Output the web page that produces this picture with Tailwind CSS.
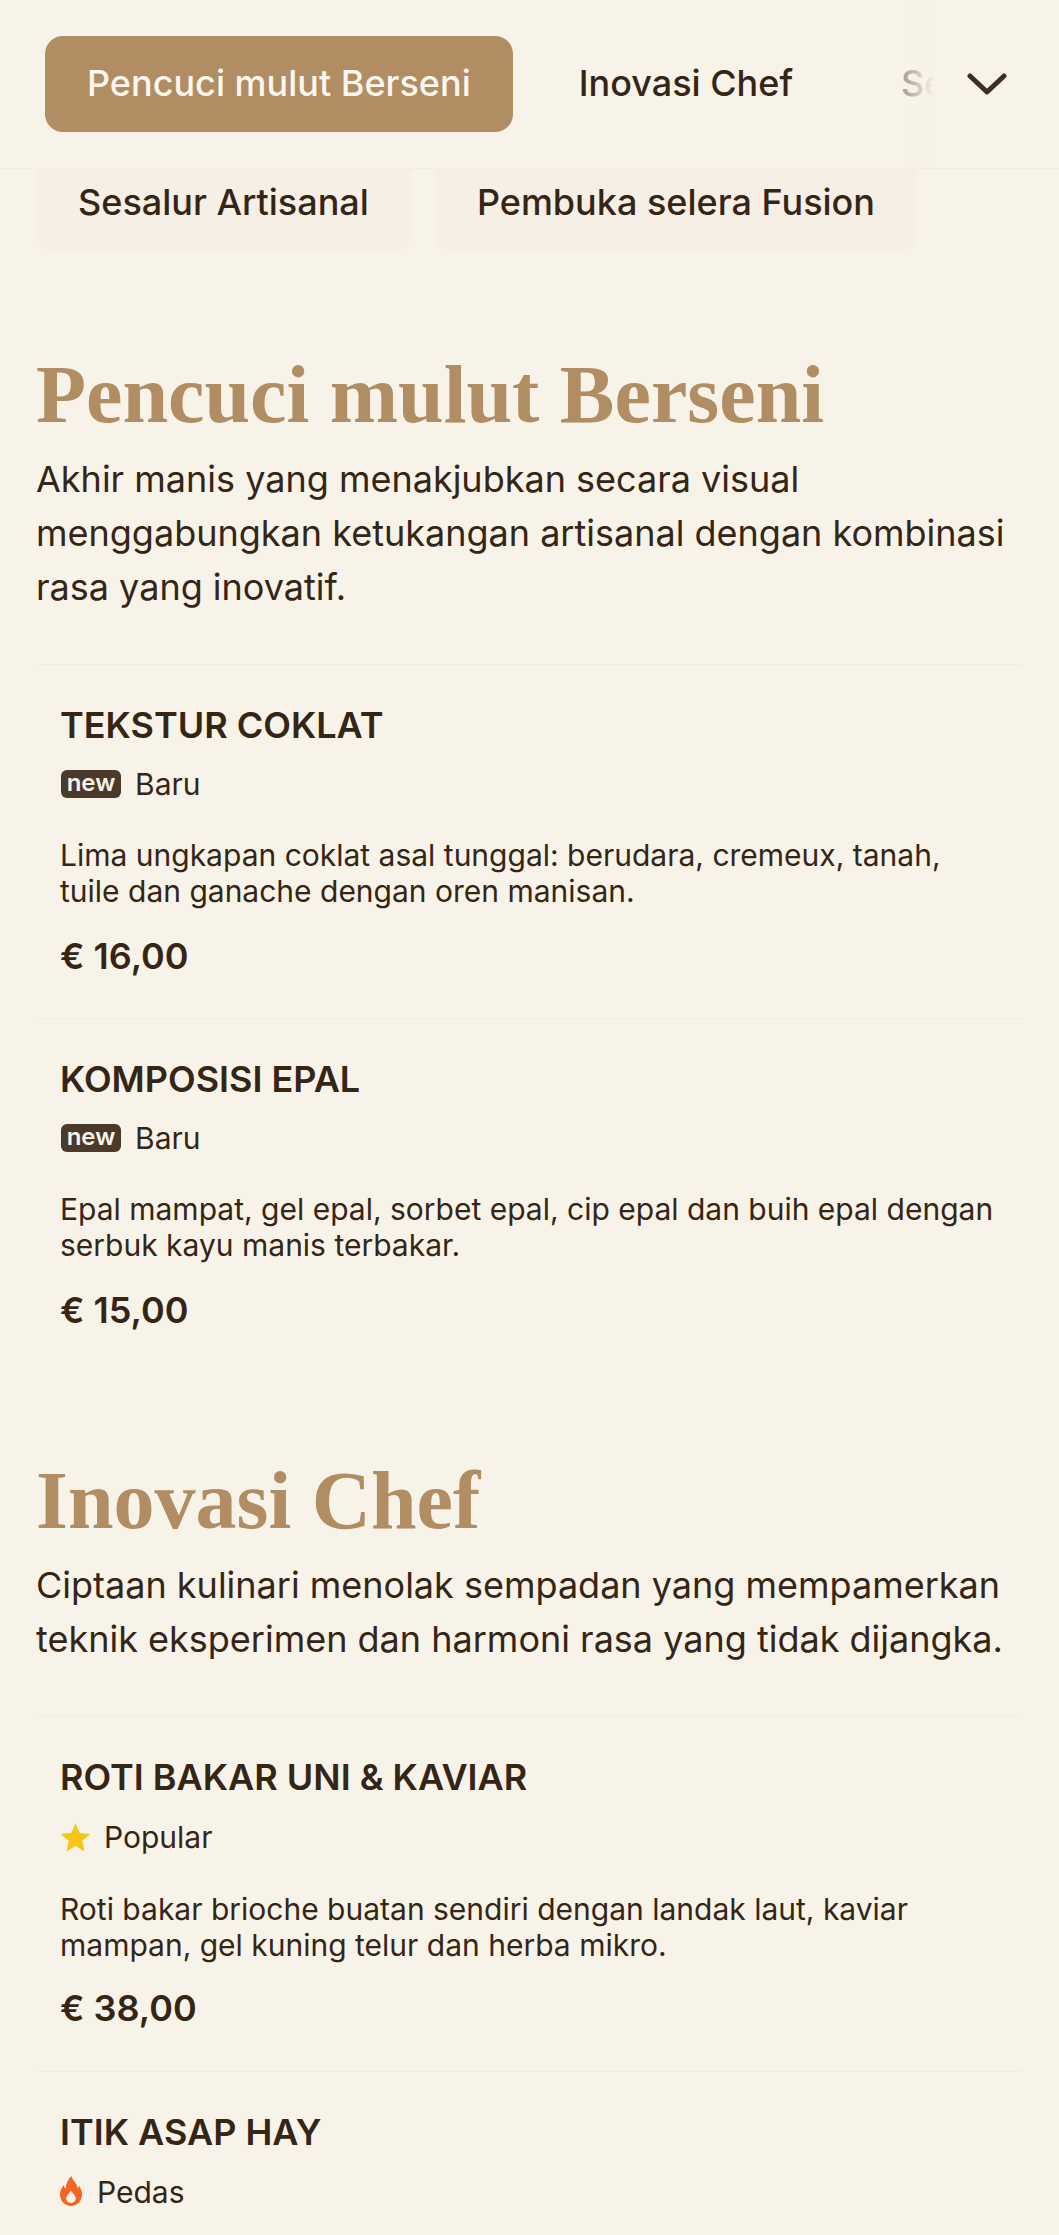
<!DOCTYPE html>
<html>
  <head>
    <meta charset="UTF-8" />
    <meta name="viewport" content="width=device-width, initial-scale=1.0" />
    <script src="https://cdn.jsdelivr.net/npm/@tailwindcss/browser@4"></script>
  </head>
  <body class="bg-[#f8f3e9] font-[Inter,sans-serif] text-[#352515]">
    <div class="h-screen overflow-hidden">
      <!-- sticky category nav -->
      <header class="relative z-10 h-[169px] border-b border-[#f2ece1] bg-[#f8f3e9] overflow-hidden">
        <nav class="flex gap-6 pl-[45px] pt-9 whitespace-nowrap text-[36px] font-medium">
          <a class="flex h-24 items-center rounded-[18px] bg-[#b08d62] px-[42px] pb-[2px] text-[#fbf6ee]">Pencuci mulut Berseni</a>
          <a class="flex h-24 items-center px-[42px] pb-[2px]">Inovasi Chef</a>
          <a class="flex h-24 items-center px-[42px] pb-[2px]">Sesalur Artisanal</a>
        </nav>
        <div class="absolute inset-y-0 right-0 flex w-[204px] items-center">
          <div class="h-full w-[80px] bg-gradient-to-r from-[#f8f3e9]/0 to-[#f8f3e9]"></div>
          <div class="flex h-full flex-1 items-center justify-center bg-[#f8f3e9] pr-5">
            <svg class="h-[22px] w-10" viewBox="0 0 40 22" fill="none" stroke="#3f2f1f" stroke-width="5" stroke-linecap="round" stroke-linejoin="round">
              <path d="M3 3 L20 19 L37 3" />
            </svg>
          </div>
        </div>
      </header>

      <!-- chips scrolled under the nav -->
      <div class="-mt-[13px] flex gap-6 px-9 text-[36px] font-medium">
        <a class="flex h-24 items-center rounded-[18px] bg-[#f5efe6] px-[42px] pb-1">Sesalur Artisanal</a>
        <a class="flex h-24 items-center rounded-[18px] bg-[#f5efe6] px-[42px] pb-1">Pembuka selera Fusion</a>
      </div>

      <main class="px-9">
        <section class="pt-[107px]">
          <h2 class="font-['Liberation_Serif',serif] text-[82px] leading-[72px] font-bold text-[#b08d62]">Pencuci mulut Berseni</h2>
          <p class="mt-[21px] text-[36px] leading-[54px]">Akhir manis yang menakjubkan secara visual menggabungkan ketukangan artisanal dengan kombinasi rasa yang inovatif.</p>
          <div class="mt-[50px]">
            <article class="border-t border-[#f2ece1] px-6 pt-[38px] pb-[40px]">
              <h3 class="text-[36px] leading-[44px] font-semibold">TEKSTUR COKLAT</h3>
              <div class="mt-[14px] flex h-[46px] items-center gap-[14px] text-[30px]">
                <span class="ml-px flex h-7 w-[60px] items-center justify-center rounded-[6px] bg-[#4a3a2a] pb-[3px] text-[24px] font-semibold text-[#f8f3e9]">new</span>Baru
              </div>
              <p class="mt-[30px] text-[30px] leading-9">Lima ungkapan coklat asal tunggal: berudara, cremeux, tanah, tuile dan ganache dengan oren manisan.</p>
              <p class="mt-[25px] text-[36px] leading-[44px] font-semibold">€ 16,00</p>
            </article>
            <article class="border-t border-[#f2ece1] px-6 pt-[38px] pb-[40px]">
              <h3 class="text-[36px] leading-[44px] font-semibold">KOMPOSISI EPAL</h3>
              <div class="mt-[14px] flex h-[46px] items-center gap-[14px] text-[30px]">
                <span class="ml-px flex h-7 w-[60px] items-center justify-center rounded-[6px] bg-[#4a3a2a] pb-[3px] text-[24px] font-semibold text-[#f8f3e9]">new</span>Baru
              </div>
              <p class="mt-[30px] text-[30px] leading-9">Epal mampat, gel epal, sorbet epal, cip epal dan buih epal dengan serbuk kayu manis terbakar.</p>
              <p class="mt-[25px] text-[36px] leading-[44px] font-semibold">€ 15,00</p>
            </article>
          </div>
        </section>

        <section class="mt-[93px]">
          <h2 class="font-['Liberation_Serif',serif] text-[82px] leading-[72px] font-bold text-[#b08d62]">Inovasi Chef</h2>
          <p class="mt-[21px] text-[36px] leading-[54px]">Ciptaan kulinari menolak sempadan yang mempamerkan teknik eksperimen dan harmoni rasa yang tidak dijangka.</p>
          <div class="mt-[49px]">
            <article class="border-t border-[#f2ece1] px-6 pt-[39px] pb-[41px]">
              <h3 class="text-[36px] leading-[44px] font-semibold">ROTI BAKAR UNI &amp; KAVIAR</h3>
              <div class="mt-[16px] flex h-[44px] items-center gap-[13px] text-[30px]">
                <svg class="h-[31px] w-[31px]" viewBox="0 0 24 24" fill="#f5c518"><path d="M12 1 L15.2 8.6 L23.4 9.3 L17.2 14.7 L19 22.8 L12 18.5 L5 22.8 L6.8 14.7 L0.6 9.3 L8.8 8.6 Z" /></svg>Popular
              </div>
              <p class="mt-[32px] text-[30px] leading-9">Roti bakar brioche buatan sendiri dengan landak laut, kaviar mampan, gel kuning telur dan herba mikro.</p>
              <p class="mt-[23px] text-[36px] leading-[44px] font-semibold">€ 38,00</p>
            </article>
            <article class="border-t border-[#f2ece1] px-6 pt-[38px] pb-[39px]">
              <h3 class="text-[36px] leading-[44px] font-semibold">ITIK ASAP HAY</h3>
              <div class="mt-[16px] flex h-[44px] items-center gap-[15px] text-[30px]">
                <svg class="mb-[2px] h-[30px] w-[22px]" viewBox="0 0 22 30" fill="#f26522"><path fill-rule="evenodd" d="M11.5 0 C12.5 4 15 6 16.5 8.5 C17.2 9.8 17.6 11 17.7 12.3 C18.6 11.6 19 10.6 19 9.5 C21 12.5 22 15.5 22 18.5 C22 25 17 30 11 30 C5 30 0 25 0 18.5 C0 14.5 2 11.5 3.8 9 C4 10.5 4.6 11.8 5.8 12.6 C5.8 7.5 8 3.5 11.5 0 Z M11 27 C13.8 27 15.8 25 15.8 22.6 C15.8 19.8 13 18 11 14.5 C9 18 6.2 19.8 6.2 22.6 C6.2 25 8.2 27 11 27 Z" /></svg>Pedas
              </div>
            </article>
          </div>
        </section>
      </main>
    </div>
  </body>
</html>
